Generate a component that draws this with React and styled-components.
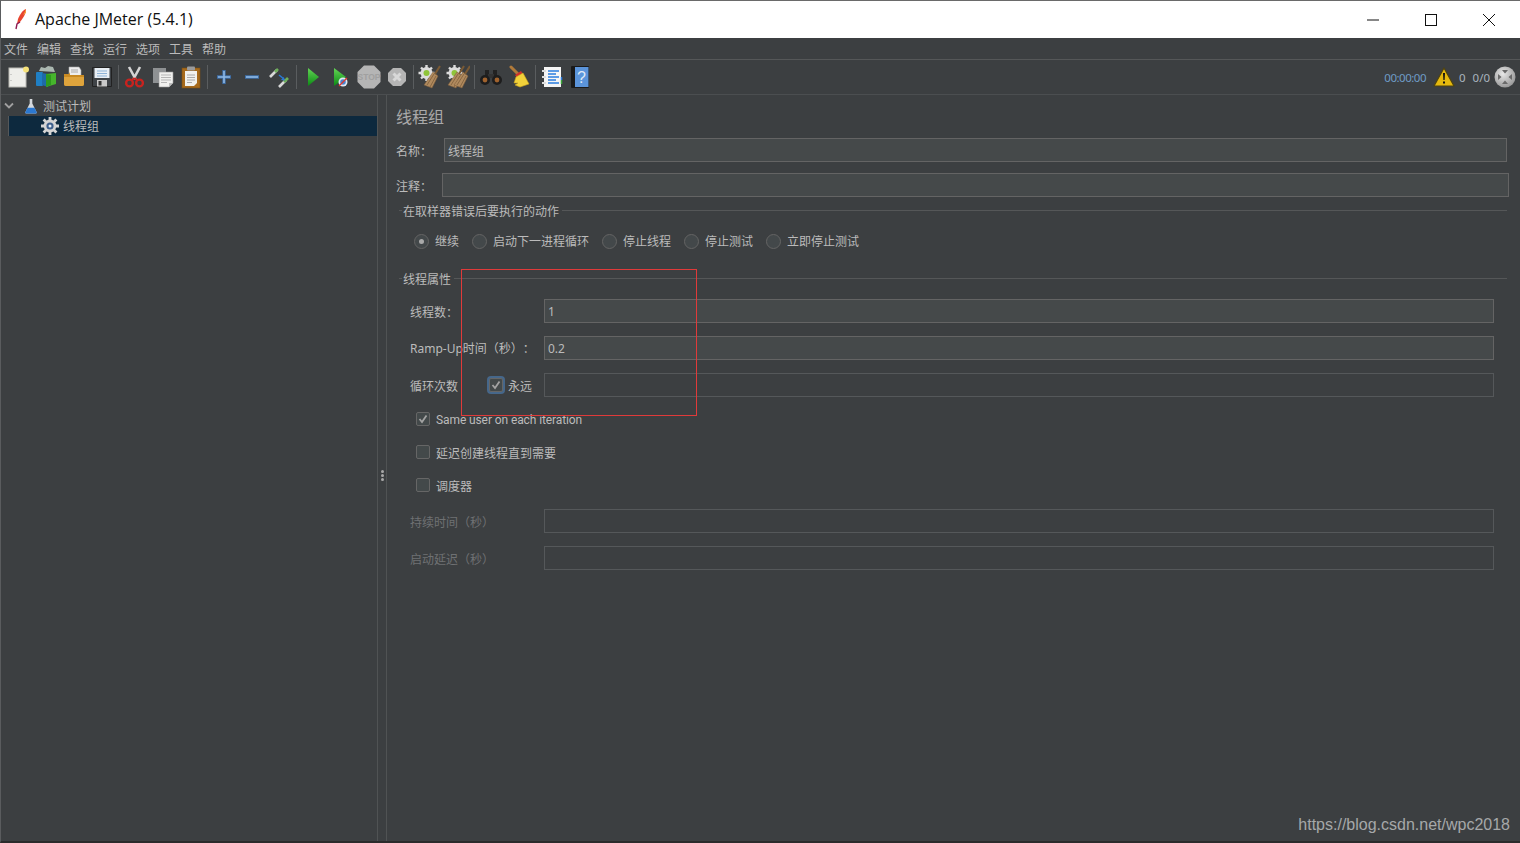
import { Fragment } from 'react';
import styled, { createGlobalStyle } from 'styled-components';

const GlobalStyle = createGlobalStyle`
  html, body { margin: 0; padding: 0; background: #3c3f41; overflow: hidden; }
  #root { height: 843px; }
`;

const cjk = `'Noto Sans', 'Noto Sans CJK SC', sans-serif`;

const Page = styled.div`
  position: relative;
  width: 1520px;
  height: 843px;
  box-sizing: border-box;
  border-left: 1px solid #5a5c5e;
  border-top: 1px solid #6a6a6a;
  border-bottom: 2px solid #2b2b2b;
  display: flex;
  flex-direction: column;
  background: #3c3f41;
  color: #bbbbbb;
  font: 12px/16px ${cjk};
  text-spacing-trim: space-all;
  overflow: hidden;
`;

const TitleBar = styled.div`
  height: 37px;
  flex: none;
  background: #fff;
  display: flex;
  align-items: center;
  padding-left: 10px;
  color: #111;
`;

const TitleText = styled.span`
  margin: -2px 0 0 6px;
  font: 16px 'Open Sans', sans-serif;
`;

const WinButtons = styled.div`
  margin-left: auto;
  padding-right: 2px;
  display: flex;
`;

const WinButton = styled.div`
  width: 58px;
  height: 37px;
  display: flex;
  align-items: center;
  justify-content: center;
`;

const MenuBar = styled.div`
  flex: none;
  display: flex;
  align-items: center;
  gap: 9px;
  padding: 2px 0 0 3px;
  height: 19px;
  border-bottom: 1px solid #555758;
`;

const Toolbar = styled.div`
  height: 34px;
  flex: none;
  display: flex;
  align-items: center;
  padding-left: 3px;
  border-bottom: 1px solid #4b4e50;
`;

const ToolButton = styled.div`
  width: 28px;
  height: 28px;
  display: flex;
  align-items: center;
  justify-content: center;
`;

const ToolSep = styled.div`
  width: 5px;
  height: 24px;
  flex: none;
  display: flex;
  justify-content: center;
  &::before {
    content: '';
    width: 1px;
    background: #5a5d5f;
  }
`;

const Status = styled.div`
  margin-left: auto;
  display: flex;
  align-items: center;
  padding-right: 4px;
  font: 11.5px 'Noto Sans', sans-serif;
`;

const Timer = styled.span`
  color: #6f9cc6;
  letter-spacing: -0.5px;
  margin-right: 7px;
`;

const Count = styled.span`
  display: flex;
  color: #a9b4be;
  margin-left: ${(p) => p.$left}px;
`;

const Split = styled.div`
  flex: 1;
  min-height: 0;
  display: flex;
`;

const Tree = styled.div`
  width: 376px;
  flex: none;
  padding-top: 1px;
`;

const TreeRow = styled.div`
  height: 20px;
  display: flex;
  align-items: center;
  padding-left: ${(p) => p.$indent}px;
  margin-left: ${(p) => (p.$selected ? 7 : 0)}px;
  background: ${(p) => (p.$selected ? '#0d293e' : 'transparent')};
  border-left: ${(p) => (p.$selected ? '1px solid #55585a' : 'none')};
`;

const TreeLabel = styled.span`
  display: flex;
  margin-left: ${(p) => p.$left}px;
  padding-top: ${(p) => p.$drop || 0}px;
`;

const Divider = styled.div`
  width: 8px;
  flex: none;
  border-left: 1px solid #505354;
  border-right: 1px solid #505354;
  display: flex;
  flex-direction: column;
  align-items: center;
  justify-content: center;
  gap: 1px;
  padding-top: 14px;
`;

const GripDot = styled.i`
  width: 3px;
  height: 3px;
  border-radius: 50%;
  background: #a9a9a9;
`;

const Panel = styled.div`
  flex: 1;
  min-width: 0;
  padding: 10px 11px 0 9px;
`;

const PanelTitle = styled.div`
  font-size: 16px;
  line-height: 24px;
  color: #a9a9a9;
`;

const FieldRow = styled.div`
  display: flex;
  align-items: center;
  height: 24px;
  margin-top: ${(p) => p.$top}px;
  margin-right: ${(p) => p.$right || 0}px;
`;

const FieldLabel = styled.label`
  flex: none;
  width: ${(p) => p.$width}px;
  padding-top: ${(p) => p.$drop ?? 4}px;
  color: ${(p) => (p.$disabled ? '#6f7173' : '#bbbbbb')};
`;

const TextBox = styled.div`
  flex: 1;
  height: 24px;
  box-sizing: border-box;
  padding-left: 3px;
  line-height: ${(p) => (p.$cjk ? 26 : 24)}px;
  background: ${(p) => (p.$disabled ? '#3c3f41' : '#45494a')};
  border: 1px solid ${(p) => (p.$disabled ? '#55585a' : '#646464')};
`;

const Group = styled.div`
  margin: ${(p) => p.$top}px 2px 0 3px;
`;

const Legend = styled.div`
  display: flex;
  align-items: center;
  gap: 1px;
  height: 16px;
  &::before {
    content: '';
    width: 3px;
    height: 1px;
    background: #555758;
    margin-top: -1px;
  }
  &::after {
    content: '';
    flex: 1;
    height: 1px;
    margin-left: 2px;
    background: #555758;
    margin-top: -1px;
  }
`;

const LegendText = styled.span`
  padding-top: 2px;
`;

const RadioRow = styled.div`
  display: flex;
  align-items: center;
  height: 20px;
  margin: 12px 0 0 15px;
`;

const RadioCircle = styled.span`
  width: 15px;
  height: 15px;
  box-sizing: border-box;
  border-radius: 50%;
  border: 1px solid #646464;
  background: #43484a;
  display: flex;
  align-items: center;
  justify-content: center;
  margin-right: 6px;
  &::after {
    content: '';
    display: ${(p) => (p.$on ? 'block' : 'none')};
    width: 5px;
    height: 5px;
    border-radius: 50%;
    background: #a9a9a9;
  }
`;

const RadioText = styled.span`
  margin-right: 13px;
  padding-top: 2px;
`;

const Props = styled.div`
  padding: 0 13px 0 11px;
`;

const CheckBox = styled.span`
  position: relative;
  flex: none;
  width: 14px;
  height: 14px;
  box-sizing: border-box;
  border: 1px solid #666;
  border-radius: 2px;
  background: #43494a;
  display: flex;
  align-items: center;
  justify-content: center;
  box-shadow: ${(p) => (p.$focused ? '0 0 0 2px #46678a' : 'none')};
`;

const Forever = styled.div`
  display: flex;
  align-items: center;
  flex: none;
  width: 85px;
  padding-left: 30px;
  box-sizing: border-box;
`;

const ForeverText = styled.span`
  margin-left: 5px;
  padding-top: 3px;
`;

const CheckRow = styled.div`
  display: flex;
  align-items: center;
  gap: 6px;
  height: 16px;
  margin: ${(p) => p.$top}px 0 0 6px;
`;

const CheckText = styled.span`
  padding-top: ${(p) => p.$drop ?? 4}px;
  font-family: ${(p) => (p.$latin ? `'Roboto', sans-serif` : 'inherit')};
  letter-spacing: ${(p) => (p.$latin ? '-0.1px' : 'normal')};
`;

const Marker = styled.div`
  position: absolute;
  left: 460px;
  top: 268px;
  width: 236px;
  height: 147px;
  box-sizing: border-box;
  border: 1px solid #e03a3a;
  pointer-events: none;
`;

const Watermark = styled.div`
  position: absolute;
  right: 10px;
  bottom: 7px;
  font: 16px 'Liberation Sans', sans-serif;
  color: #a6a8a9;
`;

const Feather = () => (
  <svg width="18" height="26" viewBox="0 0 18 26">
    <path d="M15 2c-3 1-6 5-8 10l-1 5 3-2c3-4 6-8 6-13z" fill="#e8452f" />
    <path d="M15 2c-1 3-2 4-3 6l3-2z" fill="#f6a13a" />
    <path d="M9 15l-3 2-1 5" fill="none" stroke="#8e1b52" strokeWidth="1.4" />
  </svg>
);

const Warn = () => (
  <svg width="22" height="20" viewBox="0 0 22 20">
    <path d="M11 1L21 19H1z" fill="#e5b90e" stroke="#4f4310" strokeWidth="1.2" strokeLinejoin="round" />
    <path d="M10 6h2l-.4 7h-1.2zM10 14.5h2v2h-2z" fill="#111" />
  </svg>
);

const Globe = () => (
  <svg width="22" height="22" viewBox="0 0 22 22">
    <defs>
      <radialGradient id="gl" cx="0.4" cy="0.35" r="0.75">
        <stop offset="0" stopColor="#e8e8e8" />
        <stop offset="1" stopColor="#8f8f8f" />
      </radialGradient>
    </defs>
    <circle cx="11" cy="11" r="10.5" fill="url(#gl)" />
    <path d="M8 4h6L11 7.5zM8 18h6L11 14.5zM4 8v6L7.5 11zM18 8v6L14.5 11z" fill="#6a6a6a" />
  </svg>
);

const NewIcon = () => (
  <svg width="24" height="24" viewBox="0 0 24 24">
    <rect x="3" y="3" width="17" height="19" fill="#eeeeea" stroke="#b9b9b4" />
    <circle cx="20" cy="4.5" r="3" fill="#f6e27a" />
    <path d="M5 9v.8M5 15v.8" stroke="#999" />
  </svg>
);

const TemplatesIcon = () => (
  <svg width="24" height="24" viewBox="0 0 24 24">
    <path d="M5 6l2-4 4 1 3-2 5 1 2 5z" fill="#aab7b0" />
    <rect x="2" y="7" width="7" height="14" rx="1" fill="#1f7fc4" />
    <path d="M8 8l6 1v13l-6-2z" fill="#1e6aa8" />
    <path d="M12 9l10-1v11l-10 3z" fill="#46b52c" />
    <path d="M12 9l5 1v10l-5 2z" fill="#2e9a1e" />
  </svg>
);

const OpenIcon = () => (
  <svg width="24" height="24" viewBox="0 0 24 24">
    <path d="M7 2h10l2 3v7H7z" fill="#eee" stroke="#aaa" strokeWidth="0.6" />
    <path d="M9 5h7M9 7h7" stroke="#aaa" />
    <path d="M2 9h5l1-2v3h14v9a2 2 0 0 1-2 2H4a2 2 0 0 1-2-2z" fill="#c98a22" />
    <path d="M2 12h20v7a2 2 0 0 1-2 2H4a2 2 0 0 1-2-2z" fill="#dfa43c" />
  </svg>
);

const SaveIcon = () => (
  <svg width="24" height="24" viewBox="0 0 24 24">
    <path d="M2.5 2.5h19v19h-19z" fill="#3f4347" stroke="#222" />
    <rect x="4.5" y="3" width="15" height="10" fill="#e8eef4" />
    <path d="M7 6h10M7 8.5h10M7 11h10" stroke="#8db2d6" />
    <rect x="7" y="15" width="10" height="6.5" fill="#c9c9c9" />
    <rect x="8.5" y="16" width="3" height="4.5" fill="#333" />
  </svg>
);

const CutIcon = () => (
  <svg width="24" height="24" viewBox="0 0 24 24">
    <path d="M6 2l6.500 12M17 2l-6.500 12" stroke="#d4d4d4" strokeWidth="2.6" />
    <circle cx="6.5" cy="18" r="3.4" fill="none" stroke="#c8231f" strokeWidth="2.4" />
    <circle cx="16.5" cy="18" r="3.4" fill="none" stroke="#c8231f" strokeWidth="2.4" />
    <path d="M9 15l2.500-2M14 15l-2.500-2" stroke="#c8231f" strokeWidth="2" />
  </svg>
);

const CopyIcon = () => (
  <svg width="24" height="24" viewBox="0 0 24 24">
    <rect x="2" y="3" width="13" height="15" fill="#8e9193" />
    <path d="M8 7h14v11l-4 4H8z" fill="#f0f0ee" stroke="#999" strokeWidth="0.6" />
    <path d="M10 10h10M10 12.5h10M10 15h10M10 17.5h6" stroke="#b5b5b5" />
    <path d="M18 22v-4h4z" fill="#bbb" />
  </svg>
);

const PasteIcon = () => (
  <svg width="24" height="24" viewBox="0 0 24 24">
    <rect x="3" y="3" width="18" height="20" fill="#a66a1c" stroke="#7c4e12" strokeWidth="0.6" />
    <path d="M6 6h12v12l-3 3H6z" fill="#f1f1ee" />
    <path d="M8 10h8M8 12.5h8M8 15h8M8 17.5h5" stroke="#aaa" />
    <rect x="8" y="1.5" width="8" height="4" rx="1" fill="#9a9a9a" />
  </svg>
);

const PlusIcon = () => (
  <svg width="24" height="24" viewBox="0 0 24 24">
    <path d="M12 5v14M5 12h14" stroke="#3e6ea6" strokeWidth="3.4" />
    <path d="M12 6v12M6 12h12" stroke="#8fb9e6" strokeWidth="1.6" />
  </svg>
);

const MinusIcon = () => (
  <svg width="24" height="24" viewBox="0 0 24 24">
    <path d="M5 12h14" stroke="#3e6ea6" strokeWidth="3.6" />
    <path d="M6 12h12" stroke="#8fb9e6" strokeWidth="1.6" />
  </svg>
);

const ToggleIcon = () => (
  <svg width="24" height="24" viewBox="0 0 24 24">
    <path d="M2 12l7-7" stroke="#d8d8d8" strokeWidth="2.6" />
    <path d="M7 7l3-3" stroke="#6fb05a" strokeWidth="2.6" />
    <path d="M11 22l7-7" stroke="#d8d8d8" strokeWidth="2.6" />
    <path d="M16 17l4-4" stroke="#6fb05a" strokeWidth="2.6" />
    <path d="M11 10l5 4" stroke="#2b78d2" strokeWidth="1.6" />
    <path d="M17 15.5l-4-.5 2.500-3z" fill="#2b78d2" />
  </svg>
);

const PlayIcon = () => (
  <svg width="24" height="24" viewBox="0 0 24 24">
    <defs>
      <linearGradient id="pl" x1="0" y1="0" x2="0" y2="1">
        <stop offset="0" stopColor="#63d455" />
        <stop offset="1" stopColor="#0b8a14" />
      </linearGradient>
    </defs>
    <path d="M7 3l11 9-11 9z" fill="url(#pl)" />
  </svg>
);

const PlayNoTimerIcon = () => (
  <svg width="24" height="24" viewBox="0 0 24 24">
    <path d="M5 3l12 9-12 9z" fill="url(#pl)" />
    <circle cx="14" cy="17" r="4.5" fill="#dfe9f5" />
    <circle cx="14" cy="17" r="2.8" fill="#4a86cf" />
    <path d="M10 21l8-8" stroke="#e0352b" strokeWidth="1.3" />
  </svg>
);

const StopIcon = () => (
  <svg width="24" height="24" viewBox="0 0 24 24">
    <path d="M7 0.5h10L23.5 7v10L17 23.5H7L0.5 17V7z" fill="#b5b5b5" />
    <text x="12" y="15" fontSize="8.5" fontWeight="700" fontFamily="'Liberation Sans', sans-serif" textAnchor="middle" fill="#a0a0a0">STOP</text>
  </svg>
);

const ShutdownIcon = () => (
  <svg width="20" height="20" viewBox="0 0 20 20">
    <path d="M6 1h8l5 5v8l-5 5H6l-5-5V6z" fill="#b5b5b5" />
    <path d="M6.5 6.5l7 7M13.5 6.5l-7 7" stroke="#d8d8d8" strokeWidth="3" />
  </svg>
);

const Broom = ({ x }) => (
  <g transform={`translate(${x} 0)`}>
    <path d="M14 7l5 4-6 12-8-3z" fill="#b08a5e" stroke="#7c5d3a" strokeWidth="0.5" />
    <path d="M8 20l7-11M11 22l6-11" stroke="#7c5d3a" strokeWidth="0.8" />
    <path d="M16 9l5-8" stroke="#7a5a34" strokeWidth="2" />
  </g>
);

const GearBase = () => (
  <g>
    <circle cx="8.5" cy="8" r="6" fill="#dcdcdc" />
    <path d="M8.5 0v16M.5 8h16M3 2.500l11 11M14 2.500L3 13.500" stroke="#dcdcdc" strokeWidth="2.4" />
    <circle cx="8.5" cy="8" r="3" fill="#8fc43a" />
  </g>
);

const ClearIcon = () => (
  <svg width="24" height="24" viewBox="0 0 24 24">
    <GearBase />
    <Broom x={1} />
  </svg>
);

const ClearAllIcon = () => (
  <svg width="24" height="24" viewBox="0 0 24 24">
    <GearBase />
    <Broom x={-3} />
    <Broom x={3} />
  </svg>
);

const SearchIcon = () => (
  <svg width="24" height="24" viewBox="0 0 24 24">
    <rect x="6" y="5" width="4" height="6" fill="#222" />
    <rect x="14" y="5" width="4" height="6" fill="#222" />
    <rect x="9" y="9" width="6" height="4" fill="#333" />
    <circle cx="6" cy="15" r="5" fill="#1d1d1d" />
    <circle cx="18" cy="15" r="5" fill="#1d1d1d" />
    <circle cx="6" cy="15" r="2.4" fill="#a0622d" />
    <circle cx="18" cy="15" r="2.4" fill="#a0622d" />
  </svg>
);

const ResetIcon = () => (
  <svg width="24" height="24" viewBox="0 0 24 24">
    <path d="M4 2l7 7" stroke="#b07a3a" strokeWidth="3" strokeLinecap="round" />
    <path d="M8 10l6-4 2 3-6 4z" fill="#d0302a" />
    <path d="M9 12l7-4 6 11-9 3-5-2 3-2-4 0z" fill="#f2d23a" stroke="#c9a21c" strokeWidth="0.6" />
  </svg>
);

const FunctionIcon = () => (
  <svg width="24" height="24" viewBox="0 0 24 24">
    <rect x="4" y="2" width="17" height="20" fill="#f5f5f5" />
    <path d="M8 6h11M8 9h8M8 12h11M8 15h8M8 18h11" stroke="#2a7de0" strokeWidth="1.3" />
    <path d="M2 6h4M2 12h4M2 18h4" stroke="#ddd" strokeWidth="2" />
    <path d="M21.500 12v3" stroke="#2a7de0" strokeWidth="1.5" />
    <path d="M21.500 15v4" stroke="#3aa63a" strokeWidth="1.5" />
  </svg>
);

const HelpIcon = () => (
  <svg width="24" height="24" viewBox="0 0 24 24">
    <rect x="3" y="1" width="18" height="22" rx="1" fill="#1a1a1a" />
    <rect x="7" y="2" width="13.5" height="20" fill="#5b94da" />
    <text x="13.5" y="18" fontSize="16" fontFamily="'Liberation Sans', sans-serif" textAnchor="middle" fill="#dfe9f6">?</text>
  </svg>
);

const Flask = () => (
  <svg width="14" height="18" viewBox="0 0 16 18">
    <path d="M6.5 1h3v5l5 10a1 1 0 0 1-1 1.500h-11A1 1 0 0 1 1.500 16l5-10z" fill="#d5d9dd" />
    <path d="M4 11h8l2.500 5a1 1 0 0 1-1 1.500h-11A1 1 0 0 1 1.500 16z" fill="#2c78d0" />
  </svg>
);

const ThreadGear = () => (
  <svg width="18" height="18" viewBox="0 0 18 18">
    <circle cx="9" cy="9" r="6.4" fill="#d4d4d4" />
    <path d="M9 0v18M0 9h18M2.600 2.600l12.800 12.800M15.400 2.600L2.600 15.400" stroke="#d4d4d4" strokeWidth="2.8" />
    <circle cx="9" cy="9" r="3.6" fill="#3e5f8c" />
    <circle cx="9" cy="9" r="1.5" fill="#e4ebf3" />
  </svg>
);

const Chevron = () => (
  <svg width="10" height="8" viewBox="0 0 10 8">
    <path d="M1 1.500l4 4 4-4" fill="none" stroke="#a0a0a0" strokeWidth="1.8" />
  </svg>
);

const Tick = () => (
  <svg width="10" height="10" viewBox="0 0 10 10">
    <path d="M1.500 5l2.500 3 4.500-6.500" fill="none" stroke="#a3a3a3" strokeWidth="1.8" />
  </svg>
);

const menus = ['文件', '编辑', '查找', '运行', '选项', '工具', '帮助'];

const toolGroups = [
  [NewIcon, TemplatesIcon, OpenIcon, SaveIcon],
  [CutIcon, CopyIcon, PasteIcon],
  [PlusIcon, MinusIcon, ToggleIcon],
  [PlayIcon, PlayNoTimerIcon, StopIcon, ShutdownIcon],
  [ClearIcon, ClearAllIcon],
  [SearchIcon, ResetIcon],
  [FunctionIcon, HelpIcon],
];

const errorActions = ['继续', '启动下一进程循环', '停止线程', '停止测试', '立即停止测试'];

export default function App() {
  return (
    <Page>
      <GlobalStyle />
      <TitleBar>
        <Feather />
        <TitleText>Apache JMeter (5.4.1)</TitleText>
        <WinButtons>
          <WinButton>
            <svg width="12" height="12" viewBox="0 0 12 12">
              <path d="M0 6h12" stroke="#111" />
            </svg>
          </WinButton>
          <WinButton>
            <svg width="12" height="12" viewBox="0 0 12 12">
              <rect x="0.5" y="0.5" width="11" height="11" fill="none" stroke="#111" />
            </svg>
          </WinButton>
          <WinButton>
            <svg width="12" height="12" viewBox="0 0 12 12">
              <path d="M0 0l12 12M12 0L0 12" stroke="#111" />
            </svg>
          </WinButton>
        </WinButtons>
      </TitleBar>

      <MenuBar>
        {menus.map((m) => (
          <span key={m}>{m}</span>
        ))}
      </MenuBar>

      <Toolbar>
        {toolGroups.map((group, i) => (
          <Fragment key={i}>
            {i > 0 && <ToolSep />}
            {group.map((Icon, j) => (
              <ToolButton key={j}>
                <Icon />
              </ToolButton>
            ))}
          </Fragment>
        ))}
        <Status>
          <Timer>00:00:00</Timer>
          <Warn />
          <Count $left={4}>0</Count>
          <Count $left={7}>0/0</Count>
          <Count $left={4}>
            <Globe />
          </Count>
        </Status>
      </Toolbar>

      <Split>
        <Tree>
          <TreeRow $indent={3}>
            <Chevron />
            <TreeLabel $left={10}>
              <Flask />
            </TreeLabel>
            <TreeLabel $left={5} $drop={2}>
              测试计划
            </TreeLabel>
          </TreeRow>
          <TreeRow $selected $indent={32}>
            <ThreadGear />
            <TreeLabel $left={4} $drop={2}>
              线程组
            </TreeLabel>
          </TreeRow>
        </Tree>

        <Divider>
          <GripDot />
          <GripDot />
          <GripDot />
        </Divider>

        <Panel>
          <PanelTitle>线程组</PanelTitle>
          <FieldRow $top={9} $right={2}>
            <FieldLabel $width={48}>名称：</FieldLabel>
            <TextBox $cjk>线程组</TextBox>
          </FieldRow>
          <FieldRow $top={11}>
            <FieldLabel $width={46}>注释：</FieldLabel>
            <TextBox />
          </FieldRow>

          <Group $top={6}>
            <Legend>
              <LegendText>在取样器错误后要执行的动作</LegendText>
            </Legend>
            <RadioRow>
              {errorActions.map((a, i) => (
                <Fragment key={a}>
                  <RadioCircle $on={i === 0} />
                  <RadioText>{a}</RadioText>
                </Fragment>
              ))}
            </RadioRow>
          </Group>

          <Group $top={20}>
            <Legend>
              <LegendText>线程属性</LegendText>
            </Legend>
            <Props>
              <FieldRow $top={12}>
                <FieldLabel $width={134}>线程数：</FieldLabel>
                <TextBox>1</TextBox>
              </FieldRow>
              <FieldRow $top={13}>
                <FieldLabel $width={134} $drop={2}>
                  Ramp-Up时间（秒）：
                </FieldLabel>
                <TextBox>0.2</TextBox>
              </FieldRow>
              <FieldRow $top={13}>
                <FieldLabel $width={49}>循环次数</FieldLabel>
                <Forever>
                  <CheckBox $focused>
                    <Tick />
                  </CheckBox>
                  <ForeverText>永远</ForeverText>
                </Forever>
                <TextBox $disabled />
              </FieldRow>
              <CheckRow $top={14}>
                <CheckBox>
                  <Tick />
                </CheckBox>
                <CheckText $latin $drop={2}>
                  Same user on each iteration
                </CheckText>
              </CheckRow>
              <CheckRow $top={17}>
                <CheckBox />
                <CheckText>延迟创建线程直到需要</CheckText>
              </CheckRow>
              <CheckRow $top={17}>
                <CheckBox />
                <CheckText>调度器</CheckText>
              </CheckRow>
              <FieldRow $top={16}>
                <FieldLabel $width={134} $disabled>
                  持续时间（秒）
                </FieldLabel>
                <TextBox $disabled />
              </FieldRow>
              <FieldRow $top={13}>
                <FieldLabel $width={134} $disabled>
                  启动延迟（秒）
                </FieldLabel>
                <TextBox $disabled />
              </FieldRow>
            </Props>
          </Group>
        </Panel>
      </Split>

      <Marker />
      <Watermark>https://blog.csdn.net/wpc2018</Watermark>
    </Page>
  );
}
